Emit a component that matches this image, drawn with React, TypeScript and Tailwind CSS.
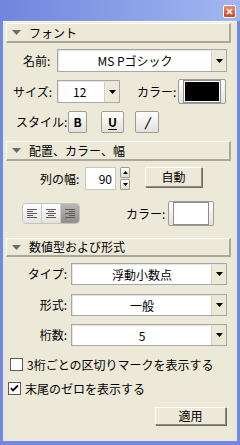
import { ReactNode } from "react";

const font = "font-['MS_PGothic','Noto_Sans_CJK_JP',sans-serif]";

const Header = ({ title, className = "" }: { title: string; className?: string }) => (
  <div
    className={`ml-[3px] mr-[6px] h-[20px] flex items-center border-t border-l border-t-white border-l-white border-r-2 border-b-2 border-r-[#aca899] border-b-[#aca899] bg-[#ece9d8] ${className}`}
  >
    <svg width="9" height="5" viewBox="0 0 9 5" className="ml-[5px] mr-[8px]">
      <path d="M0 0h9L4.5 5z" fill="#6b6b6b" />
    </svg>
    <span className="text-[12px] leading-none text-black">{title}</span>
  </div>
);

const Caret = () => (
  <svg width="9" height="5" viewBox="0 0 9 5">
    <path d="M1 0h7L4.5 4z" fill="#000" />
  </svg>
);

const Select = ({ value, className = "", align = "center" }: { value: string; className?: string; align?: "center" | "left" }) => (
  <div className={`flex border border-[#a7a6aa] bg-white ${className}`}>
    <div className="flex flex-1 border-t border-l border-[#e6e4dc]">
      <div
        className={`flex-1 flex items-center text-[12px] leading-none text-black ${
          align === "center" ? "justify-center" : "pl-[14px]"
        }`}
      >
        {value}
      </div>
      <div className="w-[15px] flex items-center justify-center bg-[#ece9d8] border-l border-[#d4d0c8]">
        <Caret />
      </div>
    </div>
  </div>
);

const Swatch = ({ color, className = "" }: { color: string; className?: string }) => (
  <div
    className={`flex items-center justify-center border border-[#9d9c96] rounded-[2px] bg-gradient-to-b from-white to-[#e4e3dd] ${className}`}
  >
    <div className="flex-1 h-full m-[4px] border border-[#8e8e8e] p-[1px] bg-white">
      <div className="w-full h-full" style={{ background: color }} />
    </div>
  </div>
);

const StyleBtn = ({ children, className = "" }: { children: ReactNode; className?: string }) => (
  <div
    className={`h-[22px] flex items-center justify-center border border-[#9d9c96] rounded-[2px] bg-gradient-to-b from-white to-[#e2e1da] text-[12px] font-bold text-black ${className}`}
  >
    {children}
  </div>
);

const AlignIcon = ({ kind }: { kind: "left" | "center" | "right" }) => {
  const rows = [9, 6, 9, 6, 9];
  return (
    <svg width="11" height="9" viewBox="0 0 11 9">
      {rows.map((w, i) => {
        const len = i % 2 === 0 ? 10 : w;
        const x = kind === "left" ? 0 : kind === "center" ? (10 - len) / 2 : 10 - len;
        return <rect key={i} x={x} y={i * 2} width={len} height="1" fill="#5a5a5a" />;
      })}
    </svg>
  );
};

const Checkbox = ({ checked, label, className = "" }: { checked?: boolean; label: string; className?: string }) => (
  <div className={`flex items-center h-[13px] ${className}`}>
    <div className="w-[13px] h-[13px] border border-[#5c5c5c] bg-white flex items-center justify-center">
      {checked && (
        <svg width="9" height="9" viewBox="0 0 9 9">
          <path d="M1 4l2 2.5L8 1.5" stroke="#000" strokeWidth="1.8" fill="none" />
        </svg>
      )}
    </div>
    <span className="ml-[4px] text-[12px] leading-none text-black whitespace-nowrap">{label}</span>
  </div>
);

export default function App() {
  return (
    <div className={`w-[240px] h-[445px] flex flex-col bg-[#7488e2] ${font}`}>
      <div className="h-[21px] flex justify-end pt-[5px] pr-[4px] bg-gradient-to-r from-[#7086de] to-[#a2b7f0]">
        <div className="w-[13px] h-[13px] rounded-[2px] border border-white bg-gradient-to-b from-[#e98a6e] to-[#d2441e] flex items-center justify-center">
          <svg width="7" height="7" viewBox="0 0 7 7">
            <path d="M1 1l5 5M6 1L1 6" stroke="#fff" strokeWidth="1.6" />
          </svg>
        </div>
      </div>

      <div className="flex-1 mx-[3px] mb-[4px] flex flex-col bg-[#ece9d8] border-t border-white">
        <Header title="フォント" className="mt-[1px]" />

        <div className="mt-[6px] h-[23px] flex items-center pl-[20px]">
          <span className="w-[34px] text-[12px] leading-none text-black">名前:</span>
          <Select value="MS Pゴシック" className="w-[170px] h-[23px]" />
        </div>

        <div className="mt-[7px] h-[25px] flex items-center pl-[10px]">
          <span className="w-[44px] text-[12px] leading-none text-black">サイズ:</span>
          <Select value="12" align="left" className="w-[63px] h-[23px]" />
          <span className="ml-[17px] w-[41px] text-[12px] leading-none text-black">カラー:</span>
          <Swatch color="#000" className="w-[48px] h-[25px]" />
        </div>

        <div className="mt-[7px] h-[22px] flex items-center pl-[13px]">
          <span className="w-[52px] text-[12px] leading-none text-black">スタイル:</span>
          <StyleBtn className="w-[19px]">B</StyleBtn>
          <StyleBtn className="w-[23px] ml-[14px]">
            <span className="underline underline-offset-2">U</span>
          </StyleBtn>
          <StyleBtn className="w-[24px] ml-[11px]">
            <span className="italic">/</span>
          </StyleBtn>
        </div>

        <Header title="配置、カラー、幅" className="mt-[8px]" />

        <div className="mt-[6px] h-[23px] flex items-start pl-[37px]">
          <span className="w-[45px] self-center text-[12px] leading-none text-black">列の幅:</span>
          <div className="w-[31px] h-[23px] border border-[#c9c7bc] bg-white flex items-center justify-end pr-[3px] text-[12px] leading-none text-black">
            90
          </div>
          <div className="ml-[4px] w-[10px] h-[23px] flex flex-col gap-[1px]">
            <div className="flex-1 border border-[#9d9c96] rounded-[1px] bg-gradient-to-b from-white to-[#dedcd2] flex items-center justify-center">
              <svg width="5" height="3" viewBox="0 0 5 3">
                <path d="M0 3h5L2.5 0z" fill="#000" />
              </svg>
            </div>
            <div className="flex-1 border border-[#9d9c96] rounded-[1px] bg-gradient-to-b from-white to-[#dedcd2] flex items-center justify-center">
              <svg width="5" height="3" viewBox="0 0 5 3">
                <path d="M0 0h5L2.5 3z" fill="#000" />
              </svg>
            </div>
          </div>
          <div className="ml-[15px] w-[57px] h-[20px] border border-[#8c8b85] border-t-white border-l-white bg-[#ece9d8] shadow-[1px_1px_0_#716f64] flex items-center justify-center text-[12px] leading-none text-black">
            自動
          </div>
        </div>

        <div className="mt-[11px] h-[25px] flex items-center pl-[19px]">
          <div className="w-[58px] h-[21px] flex rounded-[4px] border border-[#c4c3bc] overflow-hidden">
            <div className="flex-1 flex items-center justify-center bg-gradient-to-b from-white to-[#e3e2dc] border-r border-[#c9c8c2]">
              <AlignIcon kind="left" />
            </div>
            <div className="flex-1 flex items-center justify-center bg-gradient-to-b from-white to-[#e3e2dc] border-r border-[#c9c8c2]">
              <AlignIcon kind="center" />
            </div>
            <div className="flex-1 flex items-center justify-center bg-gradient-to-b from-[#b9b8b4] to-[#8f8e8a]">
              <AlignIcon kind="right" />
            </div>
          </div>
          <span className="ml-[46px] w-[42px] text-[12px] leading-none text-black">カラー:</span>
          <Swatch color="#fff" className="w-[46px] h-[25px]" />
        </div>

        <Header title="数値型および形式" className="mt-[12px] !h-[19px]" />

        <div className="mt-[6px] h-[22px] flex items-center">
          <span className="w-[68px] pr-[4px] text-right text-[12px] leading-none text-black">タイプ:</span>
          <Select value="浮動小数点" className="w-[156px] h-[22px]" />
        </div>
        <div className="mt-[9px] h-[22px] flex items-center">
          <span className="w-[68px] pr-[4px] text-right text-[12px] leading-none text-black">形式:</span>
          <Select value="一般" className="w-[156px] h-[22px]" />
        </div>
        <div className="mt-[8px] h-[22px] flex items-center">
          <span className="w-[68px] pr-[4px] text-right text-[12px] leading-none text-black">桁数:</span>
          <Select value="5" className="w-[156px] h-[22px]" />
        </div>

        <Checkbox label="3桁ごとの区切りマークを表示する" className="mt-[12px] ml-[7px]" />
        <Checkbox checked label="末尾のゼロを表示する" className="mt-[11px] ml-[5px]" />

        <div className="mt-[12px] flex justify-end pr-[11px]">
          <div className="w-[71px] h-[18px] border border-[#8c8b85] border-t-white border-l-white bg-[#ece9d8] shadow-[1px_1px_0_#716f64] flex items-center justify-center text-[12px] leading-none text-black">
            適用
          </div>
        </div>
      </div>
    </div>
  );
}
